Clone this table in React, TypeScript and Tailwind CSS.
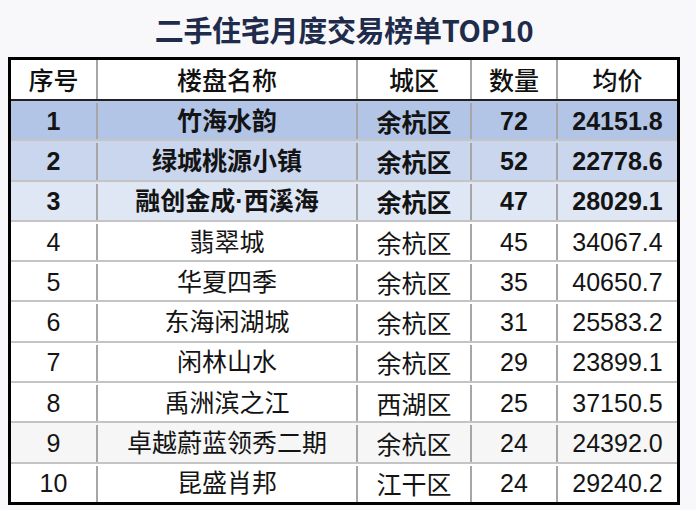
const rows = [
  { no: "1", name: "竹海水韵", area: "余杭区", count: "72", price: "24151.8", bg: "bg-[#b2c5e6]", bold: true },
  { no: "2", name: "绿城桃源小镇", area: "余杭区", count: "52", price: "22778.6", bg: "bg-[#c9d6ee]", bold: true },
  { no: "3", name: "融创金成·西溪海", area: "余杭区", count: "47", price: "28029.1", bg: "bg-[#dfe7f5]", bold: true },
  { no: "4", name: "翡翠城", area: "余杭区", count: "45", price: "34067.4", bg: "bg-white", bold: false },
  { no: "5", name: "华夏四季", area: "余杭区", count: "35", price: "40650.7", bg: "bg-white", bold: false },
  { no: "6", name: "东海闲湖城", area: "余杭区", count: "31", price: "25583.2", bg: "bg-white", bold: false },
  { no: "7", name: "闲林山水", area: "余杭区", count: "29", price: "23899.1", bg: "bg-white", bold: false },
  { no: "8", name: "禹洲滨之江", area: "西湖区", count: "25", price: "37150.5", bg: "bg-white", bold: false },
  { no: "9", name: "卓越蔚蓝领秀二期", area: "余杭区", count: "24", price: "24392.0", bg: "bg-[#f6f6f6]", bold: false },
  { no: "10", name: "昆盛肖邦", area: "江干区", count: "24", price: "29240.2", bg: "bg-white", bold: false },
];

const cjk = "font-['Noto_Sans_CJK_SC',sans-serif]";
const num = "font-['Liberation_Sans','Noto_Sans_CJK_SC',sans-serif]";

function Cell({ w, children, font, last }: { w: string; children: React.ReactNode; font: string; last?: boolean }) {
  return (
    <div className={`${w} flex items-center justify-center leading-none ${font} ${last ? "" : "border-r-2 border-[#a6a6a6]"}`}>
      {children}
    </div>
  );
}

export default function App() {
  return (
    <div className="w-[696px] h-[510px] bg-[#f8f8fa] overflow-hidden">
      <div className="w-[672px] ml-[8px]">
        <div className={`h-[57px] flex items-center justify-center pt-[2px] text-[29px] font-bold text-[#1e2b4a] tracking-[-0.3px] ${cjk}`}>
          二手住宅月度交易榜单TOP10
        </div>
        <div className="h-[448px] border-[3px] border-black bg-white flex flex-col text-[#141414]">
          <div className="h-[41px] shrink-0 flex border-b-2 border-[#222] text-[25px] font-medium text-[#111]">
            <Cell w="w-[87px]" font={cjk}>序号</Cell>
            <Cell w="w-[260px]" font={cjk}>楼盘名称</Cell>
            <Cell w="w-[114px]" font={cjk}>城区</Cell>
            <Cell w="w-[86px]" font={cjk}>数量</Cell>
            <Cell w="w-[119px]" font={cjk} last>均价</Cell>
          </div>
          {rows.map((r, i) => (
            <div
              key={r.no}
              className={`flex-1 min-h-0 flex pt-[2px] ${r.bg} ${r.bold ? "font-bold" : "font-normal"} ${i < rows.length - 1 ? "border-b-2 border-[#c4c4c4]" : ""}`}
            >
              <Cell w="w-[87px]" font={`${num} text-[25px]`}>{r.no}</Cell>
              <Cell w="w-[260px]" font={`${num} text-[25px]`}>{r.name}</Cell>
              <Cell w="w-[114px]" font={`${cjk} text-[25px]`}>{r.area}</Cell>
              <Cell w="w-[86px]" font={`${num} text-[25px]`}>{r.count}</Cell>
              <Cell w="w-[119px]" font={`${num} text-[25px]`} last>{r.price}</Cell>
            </div>
          ))}
        </div>
      </div>
    </div>
  );
}
